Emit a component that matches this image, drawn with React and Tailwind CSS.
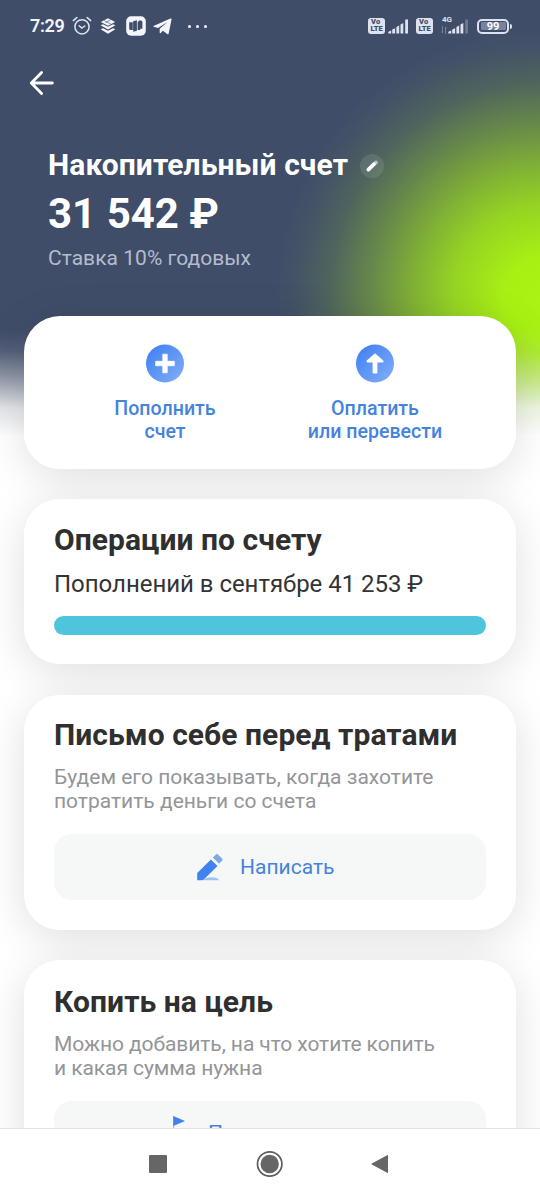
import React from "react";

function AlarmIcon() {
  return (
    <svg className="h-[20px] w-[20px]" viewBox="0 0 20 20" fill="none" stroke="#dfe4f0" strokeWidth="1.5" strokeLinecap="round">
      <circle cx="10" cy="10.8" r="7.1" />
      <path d="M1.3 4.6 4.8 1.6M18.7 4.6l-3.5-3M7.2 9.8l2.6 2.2 3-2" />
    </svg>
  );
}

function LayersIcon() {
  return (
    <svg className="h-[16px] w-[16px]" viewBox="0 0 16 16">
      <path d="M8 .3 15.2 4 8 7.8.8 4Z" fill="#f2f5fc" />
      <path d="M.6 7.2 3 6.2l5 2.6 5-2.6 2.4 1L8 11.6ZM.6 11.2 3 10.2l5 2.6 5-2.6 2.4 1L8 15.8Z" fill="#f2f5fc" />
      <path d="m4.2 2.6 6.6 3.4M10.5 1.8 5.6 4.6" stroke="#404d69" strokeWidth=".6" />
    </svg>
  );
}

function BarsAppIcon() {
  return (
    <svg className="h-[20px] w-[20px]" viewBox="0 0 20 20">
      <rect x="0.2" y="0.2" width="19.6" height="19.6" rx="5" fill="#f2f5fc" />
      <path d="M3.2 6.3h3.3v7.8H4.8a1.6 1.6 0 0 1-1.6-1.6ZM7.2 5.2l3.7-.9v10.5l-3.7.9ZM11.6 6.3l1.5-1.8h1.8a1.5 1.5 0 0 1 1.5 1.5v6.8h-2.2V14h-2.6Z" fill="#404d69" />
      <path d="M6.5 6.3h1v7.8h-1Z" fill="#404d69" />
    </svg>
  );
}

function TelegramIcon() {
  return (
    <svg className="h-[17px] w-[19px]" viewBox="0 0 19 17">
      <path d="M.5 8.1 17.4.6c.8-.3 1.3.1 1.1 1l-2.8 13.8c-.2.9-.8 1.1-1.5.6l-4.3-3.2-2.2 2.1c-.5.5-1 .3-1-.4V10.7L14.5 4 5 9.9.7 8.8C.1 8.6.1 8.3.5 8.1Z" fill="#f2f5fc" />
    </svg>
  );
}

function VolteBadge() {
  return (
    <span className="flex h-[16px] w-[17px] flex-col items-center justify-center rounded-[3px] bg-[#dce2f0] text-[7.5px] font-black leading-[6.8px] text-[#404d69]">
      <span className="w-full pl-[3px] tracking-[0.3px]">Vo</span>
      <span>LTE</span>
    </span>
  );
}

function Signal({ weakLast }) {
  return (
    <svg className="h-[15px] w-[21px]" viewBox="0 0 21 15" fill="#dce2f0">
      <path d="M.3 14.5v-1.8l2.9-1.1v2.9ZM4.2 14.5v-3.9l2.9-1.4v5.3ZM8.4 14.5V8.1l2.8-1.6v8ZM12.5 14.5v-9l2.8-1.6v10.6Z" />
      <rect x="17.2" y="0.5" width="2.8" height="14" opacity={weakLast ? 0.3 : 1} />
    </svg>
  );
}

function StatusBar() {
  return (
    <div className="flex h-[52px] items-center pl-[30px] pr-[28px]">
      <span className="w-[35px] whitespace-nowrap text-[18px] font-semibold leading-none tracking-[-0.3px] text-[#f2f5fc]">7:29</span>
      <div className="ml-[7px]"><AlarmIcon /></div>
      <div className="ml-[8px]"><LayersIcon /></div>
      <div className="ml-[10px]"><BarsAppIcon /></div>
      <div className="ml-[7px]"><TelegramIcon /></div>
      <div className="ml-[16px] flex gap-[5px]">
        <i className="size-[3px] rounded-full bg-[#f2f5fc]" />
        <i className="size-[3px] rounded-full bg-[#f2f5fc]" />
        <i className="size-[3px] rounded-full bg-[#f2f5fc]" />
      </div>
      <div className="ml-auto flex items-center">
        <VolteBadge />
        <div className="ml-[3px]"><Signal /></div>
        <div className="ml-[7px]"><VolteBadge /></div>
        <div className="relative ml-[15px]">
          <span className="absolute -left-[6px] -top-[3px] text-[8px] font-bold leading-none text-[#dce2f0]">4G</span>
          <svg className="absolute -left-[7px] top-[7px] h-[8px] w-[6px]" viewBox="0 0 6 8" fill="none" stroke="#74809c" strokeWidth="1">
            <path d="M1.5 0v7M.2 5.5 1.5 7M4.5 8V1M5.8 2.5 4.5 1" />
          </svg>
          <Signal weakLast />
        </div>
        <div className="ml-[8px] flex items-center">
          <span className="flex h-[15px] w-[32px] items-center justify-center rounded-[5px] border-2 border-[#dce2f0]">
            <span className="flex h-[8px] w-[25px] items-center justify-center rounded-[1px] bg-[#77829b] text-[11px] font-bold leading-none text-white">99</span>
          </span>
          <i className="ml-px h-[5px] w-[2px] rounded-r bg-[#dce2f0]" />
        </div>
      </div>
    </div>
  );
}

function Header() {
  return (
    <header className="h-[316px] text-white">
      <StatusBar />
      <div className="flex h-[62px] items-center pl-[29px]">
        <svg className="h-[26px] w-[26px]" viewBox="0 0 26 26" fill="none" stroke="white" strokeWidth="2.8" strokeLinecap="round" strokeLinejoin="round">
          <path d="M12.6 2.6 2.3 13l10.3 10.4M2.8 13H23.4" />
        </svg>
      </div>
      <div className="flex flex-col px-[48px] pt-[31px]">
        <div className="flex h-[40px] items-center gap-[12px]">
          <h1 className="whitespace-nowrap text-[30px] font-bold leading-[40px] tracking-[0.09px]">Накопительный счет</h1>
          <span className="mt-[2px] flex size-[24px] items-center justify-center rounded-full bg-white/10">
            <svg className="size-[14px]" viewBox="0 0 14 14" fill="none" stroke="white" strokeWidth="3.8" strokeLinecap="round">
              <path d="m10 4.3 1-.9" stroke="#b9c2c6" />
              <path d="M3.4 10.6 9 5.2" />
            </svg>
          </span>
        </div>
        <div className="mt-px flex h-[56px] items-center whitespace-nowrap text-[42px] font-bold leading-[56px]">31 542 ₽</div>
        <div className="whitespace-nowrap text-[21px] leading-[32px] tracking-[0.03px] text-[#b4bccd]">Ставка 10% годовых</div>
      </div>
    </header>
  );
}

function Action({ children, icon }) {
  return (
    <div className="flex w-[210px] flex-col items-center">
      <svg className="size-[39px]" viewBox="0 0 39 39">
        <defs>
          <linearGradient id={icon} x1="0" y1="0" x2="1" y2="1">
            <stop offset="0.1" stopColor="#4283f2" />
            <stop offset="1" stopColor="#83aff8" />
          </linearGradient>
        </defs>
        <circle cx="19" cy="19.5" r="19" fill={`url(#${icon})`} />
        {icon === "plus" ? (
          <path d="M16.8 10.2h4.4v7.1h7.1v4.4h-7.1v7.1h-4.4v-7.1H9.7v-4.4h7.1Z" fill="white" stroke="white" strokeWidth=".8" strokeLinejoin="round" />
        ) : (
          <path d="M19 9.3 27.2 16.6a1.2 1.2 0 0 1-.8 2H21.4V28.6a1 1 0 0 1-1 1H17.6a1 1 0 0 1-1-1V18.6H11.6a1.2 1.2 0 0 1-.8-2Z" fill="white" />
        )}
      </svg>
      <div className="mt-[15px] whitespace-nowrap text-center text-[19.6px] font-medium leading-[22.5px] text-[#4583dc]">{children}</div>
    </div>
  );
}

function Card({ className, children }) {
  return (
    <section
      className={`relative mx-[24px] rounded-[36px] bg-white before:absolute before:inset-0 before:-z-10 before:rounded-[36px] before:shadow-[0_8px_44px_rgba(0,0,0,0.13)] before:content-[''] ${className}`}
    >
      {children}
    </section>
  );
}

function CardTitle({ children }) {
  return <h2 className="whitespace-nowrap text-[30px] font-bold leading-[36px] tracking-[0.06px] text-[#2f2f2f]">{children}</h2>;
}

function CardText({ children, className = "" }) {
  return <p className={`whitespace-nowrap text-[21px] leading-[24px] text-[#939599] ${className}`}>{children}</p>;
}

function PencilIcon() {
  return (
    <svg className="h-[28px] w-[28px]" viewBox="0 0 28 28">
      <path d="M7 27.3c3-3.6 14.5-4.2 16 0Z" fill="#9fc2f5" />
      <path d="M1.2 27.3v-7.4L14.9 6.4l6.6 6.6L8.5 25.8c-1 1-2.1 1.5-3.5 1.5Z" fill="#4083f0" />
      <path d="m16.8 4.6 3.3-3.4q.8-.8 1.6 0l4.6 4.6q.8.8 0 1.6l-3.3 3.3Z" fill="#7fa9e6" />
    </svg>
  );
}

function SystemNav() {
  return (
    <nav className="flex h-[72px] shrink-0 items-center border-t border-[#e4e4e4] bg-white pb-[2px] pl-[149px]">
      <span className="size-[18px] rounded-[1px] bg-[#666]" />
      <svg className="ml-[89px] size-[28px]" viewBox="0 0 28 28">
        <circle cx="13.7" cy="14" r="12.2" fill="none" stroke="#5d5d5d" strokeWidth="1.7" />
        <circle cx="13.7" cy="14" r="9.2" fill="#666" />
      </svg>
      <svg className="ml-[87px] h-[20px] w-[18px]" viewBox="0 0 18 20">
        <path d="M17 .7v18.6L.8 10.6q-.8-.6 0-1.2Z" fill="#666" />
      </svg>
    </nav>
  );
}

export default function App() {
  return (
    <div className="flex h-[1200px] w-[540px] flex-col overflow-hidden bg-white font-[Roboto,sans-serif]">
      <main className="isolate min-h-0 flex-1 overflow-hidden bg-[linear-gradient(to_bottom,rgba(255,255,255,0)_330px,rgba(255,255,255,0.1)_351px,rgba(255,255,255,0.45)_380px,rgba(255,255,255,0.85)_408px,#fff_436px),radial-gradient(circle_270px_at_545px_298px,#aaf312_0%,rgba(170,243,18,0.98)_15%,rgba(170,243,18,0.81)_34%,rgba(170,243,18,0.6)_49%,rgba(170,243,18,0.37)_64%,rgba(170,243,18,0.14)_80%,rgba(170,243,18,0.04)_92%,rgba(170,243,18,0)_100%),linear-gradient(#404d69,#404d69)] bg-no-repeat">
        <Header />
        <Card className="flex h-[153px] justify-center pt-[28px]">
          <Action icon="plus">Пополнить<br />счет</Action>
          <Action icon="transfer">Оплатить<br />или перевести</Action>
        </Card>
        <Card className="mt-[30px] h-[165px] px-[30px] pt-[23px]">
          <CardTitle>Операции по счету</CardTitle>
          <p className="mt-[10px] whitespace-nowrap text-[24px] leading-[32px] tracking-[-0.03px] text-[#333]">Пополнений в сентябре 41 253 ₽</p>
          <div className="mt-[16px] h-[19px] rounded-full bg-[#4fc4dd]" />
        </Card>
        <Card className="mt-[31px] h-[235px] px-[30px] pt-[22px]">
          <CardTitle>Письмо себе перед тратами</CardTitle>
          <CardText className="mt-[12px]">Будем его показывать, когда захотите<br />потратить деньги со счета</CardText>
          <button className="mt-[21px] flex h-[66px] w-full items-center rounded-[18px] bg-[#f5f8f7] pl-[142px] text-[21px] text-[#4583dc]">
            <PencilIcon />
            <span className="ml-[16px] mt-px">Написать</span>
          </button>
        </Card>
        <Card className="mt-[30px] h-[235px] px-[30px] pt-[24px]">
          <CardTitle>Копить на цель</CardTitle>
          <CardText className="mt-[12px] tracking-[-0.08px]">Можно добавить, на что хотите копить<br />и какая сумма нужна</CardText>
          <button className="mt-[21px] flex h-[66px] w-full items-center rounded-[18px] bg-[#f5f8f7] pl-[119px] text-[21px] text-[#4583dc]">
            <svg className="h-[38px] w-[13px]" viewBox="0 0 13 38">
              <path d="M.3 1 12 6 .3 11Z" fill="#4083f0" />
              <path d="M.6 1v35" stroke="#4083f0" strokeWidth=".6" />
            </svg>
            <span className="ml-[22px]">Поставить цель</span>
          </button>
        </Card>
      </main>
      <SystemNav />
    </div>
  );
}
